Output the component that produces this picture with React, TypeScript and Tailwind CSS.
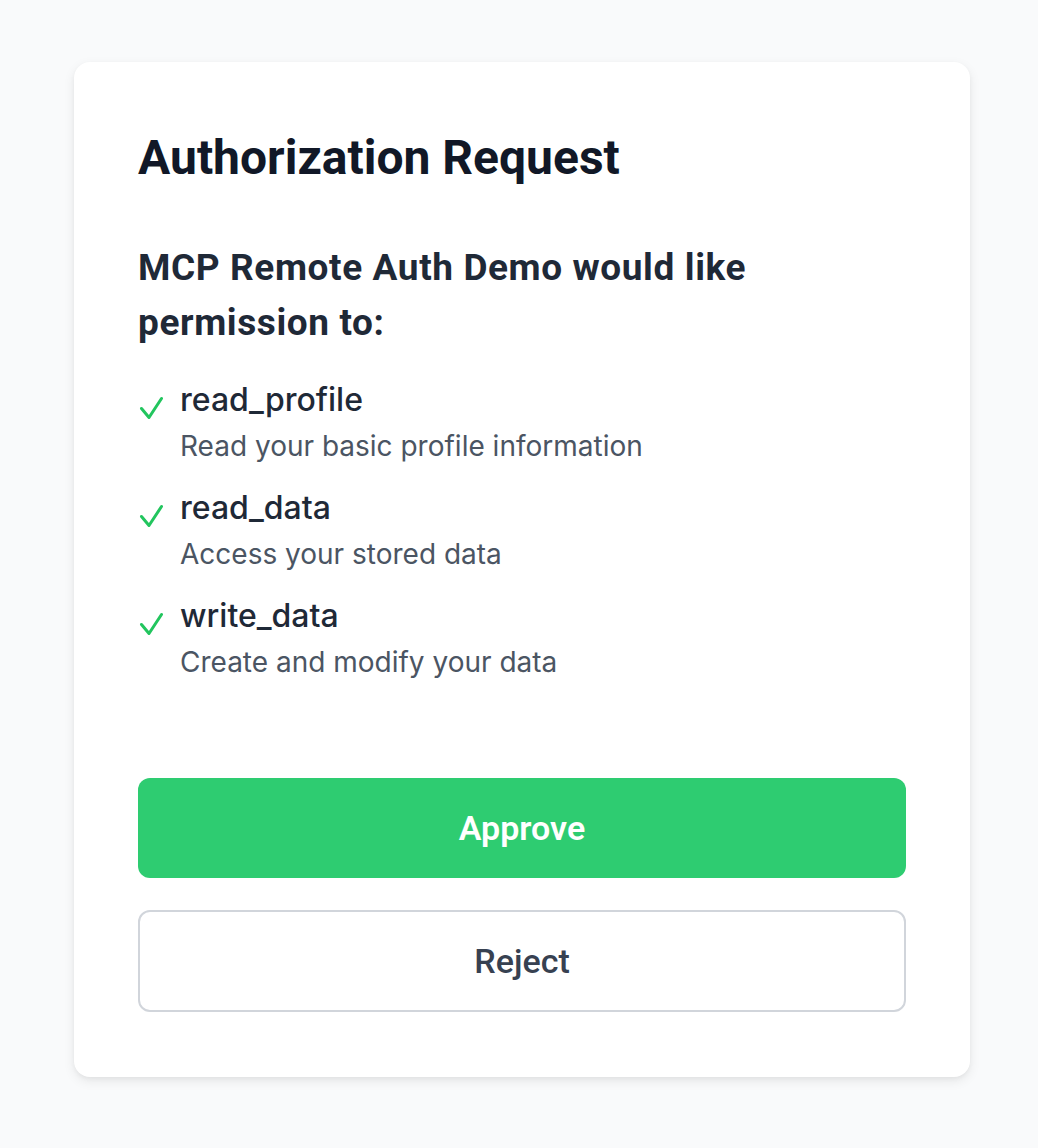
import React from "react";

const items = [
  { name: "read_profile", desc: "Read your basic profile information" },
  { name: "read_data", desc: "Access your stored data" },
  { name: "write_data", desc: "Create and modify your data" },
];

function Check() {
  return (
    <svg width="26" height="24" viewBox="0 0 26 24" fill="none" className="block">
      <path d="M4.5 12.5 L12 21.5 L24.5 2.5" stroke="#22c55e" strokeWidth="3" strokeLinecap="round" strokeLinejoin="round" />
    </svg>
  );
}

export default function App() {
  return (
    <div className="min-h-[1148px] w-full bg-[#f9fafb] pt-[62px] pl-[6px] flex justify-center items-start">
      <div className="w-[896px] bg-white rounded-[16px] shadow-[0_4px_12px_rgba(0,0,0,0.08),0_2px_4px_rgba(0,0,0,0.04)] p-[64px] pb-[65px]">
        <h1 className="text-[48px] leading-[64px] font-bold text-[#111827]" style={{ fontFamily: "Roboto, sans-serif" }}>
          Authorization Request
        </h1>
        <p className="mt-[50px] text-[37px] leading-[55px] font-bold tracking-[0.6px] text-[#1f2937] w-[680px]" style={{ fontFamily: "Roboto, sans-serif" }}>
          MCP Remote Auth Demo would like permission to:
        </p>
        <ul className="mt-[26px] flex flex-col gap-[18px]" style={{ fontFamily: "Inter, sans-serif" }}>
          {items.map((it) => (
            <li key={it.name} className="flex items-start">
              <div className="w-[43px] shrink-0 pt-[20px] -ml-[1px]">
                <Check />
              </div>
              <div className="flex flex-col">
                <span className="text-[32px] leading-[48px] font-medium text-[#1f2937]">{it.name}</span>
                <span className="mt-[2px] text-[28px] leading-[40px] text-[#4b5563]">{it.desc}</span>
              </div>
            </li>
          ))}
        </ul>
        <div className="mt-[96px] flex flex-col gap-[32px]" style={{ fontFamily: "Roboto, sans-serif" }}>
          <button className="h-[100px] w-full rounded-[12px] bg-[#2ecc71] text-white text-[34px] font-semibold">
            Approve
          </button>
          <button className="h-[102px] w-full rounded-[12px] border-2 border-[#d1d5db] bg-white text-[#374151] text-[34px] font-medium">
            Reject
          </button>
        </div>
      </div>
    </div>
  );
}
